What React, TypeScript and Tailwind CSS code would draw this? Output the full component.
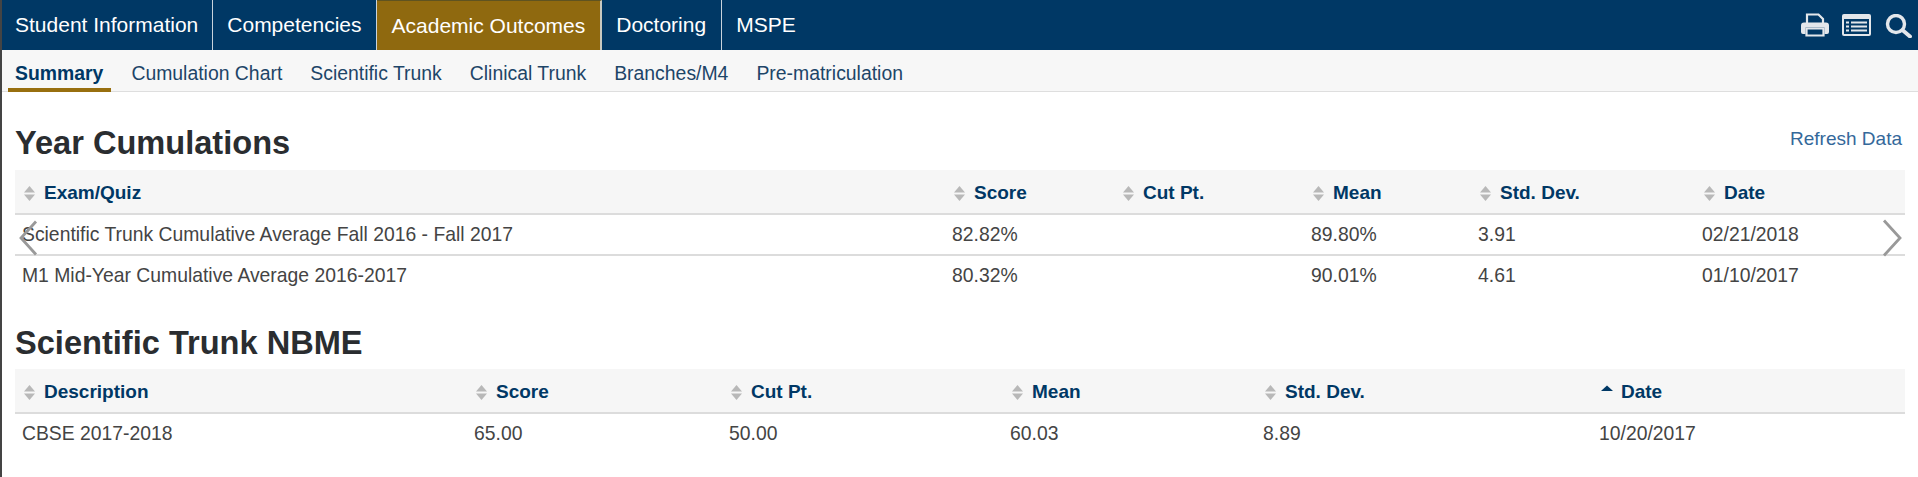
const SortIcon = ({ active }: { active?: boolean }) => (
    <svg width="12" height="15" viewBox="0 0 12 15" className="shrink-0">
        {active ? (
            <path d="M6 0.5 L12 6 L0 6 Z" fill="#003865" />
        ) : (
            <>
                <path d="M5.5 0 L11 6.500 L0 6.500 Z" fill="#b8b8b8" />
                <path d="M5.5 15 L11 8.500 L0 8.500 Z" fill="#b8b8b8" />
            </>
        )}
    </svg>
)

const PrintIcon = () => (
    <svg width="28" height="24" viewBox="0 0 28 24" fill="none">
        <path d="M3 9.5h22a3 3 0 0 1 3 3v6.500a2 2 0 0 1-2 2h-2.500v-6.500H4.500V21H2a2 2 0 0 1-2-2v-6.500a3 3 0 0 1 3-3z" fill="#e3e7eb" />
        <path d="M6 10V1.500h11.500l4.500 4.500v4" stroke="#e3e7eb" strokeWidth="2.200" />
        <path d="M5.500 15.500h17v7h-17z" stroke="#e3e7eb" strokeWidth="2.200" />
    </svg>
)

const ListIcon = () => (
    <svg width="29" height="22" viewBox="0 0 29 22">
        <rect width="29" height="22" rx="2" fill="#e3e7eb" />
        <rect x="2" y="5" width="25" height="15" fill="#003865" />
        <path d="M4 7.500h3v2H4zM9 7.500h16v2H9zM4 11.500h3v2H4zM9 11.500h16v2H9zM4 15.500h3v2H4zM9 15.500h16v2H9z" fill="#e3e7eb" />
    </svg>
)

const SearchIcon = () => (
    <svg width="27" height="24" viewBox="0 0 27 24" fill="none" stroke="#e3e7eb" strokeLinecap="round">
        <circle cx="11" cy="10" r="8.500" strokeWidth="3.400" />
        <path d="M18 16.500 L25 22.500" strokeWidth="3.800" />
    </svg>
)

interface TableProps {
    headers: string[],
    widths: number[],
    rows: string[][],
    activeCol?: number,
}

const DataTable = ({ headers, widths, rows, activeCol }: TableProps) => (
    <table className="w-full table-fixed border-separate border-spacing-0 text-[19.35px] text-[#444]">
        <colgroup>
            {widths.map((w, i) => <col key={i} style={{ width: w }} />)}
        </colgroup>
        <thead>
            <tr className="bg-[#f6f6f6]">
                {headers.map((h, i) => (
                    <th key={h} className="h-[45px] pl-[9px] pt-[4px] text-left text-[19px] font-bold text-[#003865] border-b-2 border-[#dcdcdc]">
                        <div className="flex items-center gap-[8px]">
                            <SortIcon active={i === activeCol} />
                            {h}
                        </div>
                    </th>
                ))}
            </tr>
        </thead>
        <tbody>
            {rows.map((r, i) => (
                <tr key={i}>
                    {r.map((c, j) => (
                        <td key={j} className={`h-[41px] pl-[7px] border-b-2 ${i < rows.length - 1 ? "border-[#dcdcdc]" : "border-transparent"}`}>{c}</td>
                    ))}
                </tr>
            ))}
        </tbody>
    </table>
)

const NavTab = ({ label, className }: { label: string, className: string }) => (
    <div className={`h-full flex items-center ${className}`}>
        {label}
    </div>
)

export default function App() {
    const subTabs = ["Cumulation Chart", "Scientific Trunk", "Clinical Trunk", "Branches/M4", "Pre-matriculation"]

    return (
        <div className="relative w-[1918px] h-[477px] overflow-hidden bg-white border-l-2 border-[#444]" style={{ fontFamily: '"Liberation Sans", Arial, sans-serif' }}>
            <div className="h-[50px] bg-[#003865] flex items-center justify-between text-white text-[21px]">
                <div className="flex h-full">
                    <NavTab label="Student Information" className="pl-[13px] pr-[14px] border-r border-[#c9d3dc]" />
                    <NavTab label="Competencies" className="px-[14px] border-r border-[#c9d3dc]" />
                    <NavTab label="Academic Outcomes" className="px-[15px] bg-[#8f690f] border-t border-t-[#5f5320] border-r-2 border-r-[#c9c9c0]" />
                    <NavTab label="Doctoring" className="pl-[14px] pr-[15px] border-r border-[#c9d3dc]" />
                    <NavTab label="MSPE" className="px-[14px]" />
                </div>
                <div className="flex items-center pr-[6px]">
                    <PrintIcon />
                    <div className="ml-[13px]"><ListIcon /></div>
                    <div className="ml-[14px] mt-[2px]"><SearchIcon /></div>
                </div>
            </div>
            <div className="h-[42px] bg-[#f7f7f7] border-b border-[#dedede] flex items-stretch pl-[6px] text-[19.4px] text-[#1d4568]">
                <div className="flex items-center pl-[7px] pr-[8px] pt-[9px] border-b-4 border-[#986f0f] font-bold text-[#003865] h-[41.500px]">Summary</div>
                <div className="flex items-center gap-[28px] pl-[20px] pt-[6px] h-[41px]">
                    {subTabs.map(t => <span key={t}>{t}</span>)}
                </div>
            </div>
            <div className="px-[13px]">
                <div className="flex items-start justify-between pt-[34px] pb-[11px]">
                    <h1 className="text-[32.6px] font-bold text-[#2a2d30] leading-[33px]">Year Cumulations</h1>
                    <a className="text-[19px] leading-none text-[#34689a] mt-[3px] pr-[3px]">Refresh Data</a>
                </div>
                <DataTable
                    headers={["Exam/Quiz", "Score", "Cut Pt.", "Mean", "Std. Dev.", "Date"]}
                    widths={[930, 169, 190, 167, 224, 210]}
                    rows={[
                        ["Scientific Trunk Cumulative Average Fall 2016 - Fall 2017", "82.82%", "", "89.80%", "3.91", "02/21/2018"],
                        ["M1 Mid-Year Cumulative Average 2016-2017", "80.32%", "", "90.01%", "4.61", "01/10/2017"],
                    ]}
                />
                <h1 className="text-[32.6px] font-bold text-[#2a2d30] leading-[33px] pt-[29px] pb-[10px]">Scientific Trunk NBME</h1>
                <DataTable
                    headers={["Description", "Score", "Cut Pt.", "Mean", "Std. Dev.", "Date"]}
                    widths={[452, 255, 281, 253, 336, 313]}
                    activeCol={5}
                    rows={[["CBSE 2017-2018", "65.00", "50.00", "60.03", "8.89", "10/20/2017"]]}
                />
            </div>
            <svg width="20" height="36" viewBox="0 0 20 36" className="absolute left-[16px] top-[220px]" fill="none" stroke="#999" strokeWidth="2.800">
                <path d="M18 1.500 L3 18 L18 34.500" />
            </svg>
            <svg width="20" height="38" viewBox="0 0 20 38" className="absolute left-[1880px] top-[219px]" fill="none" stroke="#999" strokeWidth="2.800">
                <path d="M2 1.500 L18 19 L2 36.500" />
            </svg>
        </div>
    )
}
